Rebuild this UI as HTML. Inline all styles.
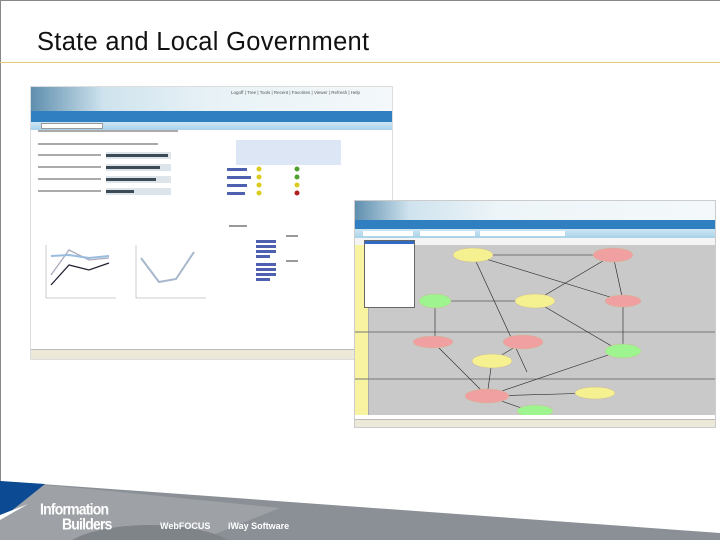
<!DOCTYPE html>
<html><head><meta charset="utf-8"><style>
*{margin:0;padding:0;box-sizing:border-box}
html,body{width:720px;height:540px;overflow:hidden}
body{background:#fff;position:relative;font-family:"Liberation Sans",sans-serif}
.abs{position:absolute}
.t{font-size:5px;color:#555;position:absolute;white-space:nowrap}
</style></head><body>
<div class="abs" style="left:0;top:0;width:720px;height:1px;background:#888"></div>
<div class="abs" style="left:0;top:0;width:1px;height:540px;background:#888"></div>
<div class="abs" style="left:37px;top:28px;font-size:25.5px;color:#111;letter-spacing:0.3px">State and Local Government</div>
<div class="abs" style="left:0;top:62px;width:720px;height:1px;background:#e0c870"></div>

<!-- screenshot 1 -->
<div class="abs" style="left:30px;top:86px;width:363px;height:274px;background:#fff;border:1px solid #ddd;overflow:hidden">
 <div class="abs" style="left:0;top:0;width:363px;height:24px;background:linear-gradient(90deg,#5f8fae,#cfe3ee 20%,#e8f2f6 50%,#f4f8fa)"></div>
 <div class="t" style="left:200px;top:3px;font-size:4.5px">Logoff | Tree | Tools | Recent | Favorites | Viewer | Refresh | Help</div>
 <div class="abs" style="left:0;top:24px;width:363px;height:11px;background:#2f7fc1"></div>
 <div class="abs" style="left:0;top:35px;width:363px;height:8px;background:linear-gradient(#cfe6f3,#a8d2ea)"></div>
 <div class="abs" style="left:10px;top:36px;width:62px;height:6px;background:#fff;border:1px solid #999"></div>
 <svg class="abs" style="left:0;top:43px" width="363" height="220">
  <g fill="#dde4ea"><rect x="75" y="22" width="65" height="7"/><rect x="75" y="34" width="65" height="7"/><rect x="75" y="46" width="65" height="7"/><rect x="75" y="58" width="65" height="7"/></g>
  <g fill="#3b4a55"><rect x="75" y="24" width="62" height="3"/><rect x="75" y="36" width="54" height="3"/><rect x="75" y="48" width="50" height="3"/><rect x="75" y="60" width="28" height="3"/></g>
  <g fill="#aaa"><rect x="7" y="24" width="63" height="2"/><rect x="7" y="36" width="63" height="2"/><rect x="7" y="48" width="63" height="2"/><rect x="7" y="60" width="63" height="2"/><rect x="7" y="0" width="140" height="2"/><rect x="7" y="13" width="120" height="2"/></g>
  <rect x="205" y="10" width="105" height="25" fill="#dde6f5"/>
  <g fill="#5060b0"><rect x="196" y="38" width="20" height="3"/><rect x="196" y="46" width="24" height="3"/><rect x="196" y="54" width="20" height="3"/><rect x="196" y="62" width="18" height="3"/></g>
  <g fill="#d8cc20"><circle cx="228" cy="39" r="2.5"/><circle cx="228" cy="47" r="2.5"/><circle cx="228" cy="55" r="2.5"/><circle cx="228" cy="63" r="2.5"/><circle cx="266" cy="55" r="2.5"/></g>
  <g fill="#50a030"><circle cx="266" cy="39" r="2.5"/><circle cx="266" cy="47" r="2.5"/></g>
  <circle cx="266" cy="63" r="2.5" fill="#b02020"/>
  <g fill="none" stroke-width="1.3"><polyline points="20,155 38,135 58,140 78,133" stroke="#223"/><polyline points="20,145 38,120 58,130 78,128" stroke="#aab"/><polyline points="20,126 38,125 58,128 78,126" stroke="#9bd" stroke-width="2"/>
  <polyline points="110,128 128,152 145,149 163,122" stroke="#a8b8cc" stroke-width="2"/></g>
  <g stroke="#999" stroke-width=".5"><line x1="15" y1="115" x2="15" y2="168"/><line x1="15" y1="168" x2="85" y2="168"/><line x1="105" y1="115" x2="105" y2="168"/><line x1="105" y1="168" x2="175" y2="168"/></g>
  <g fill="#5060b0"><rect x="225" y="110" width="20" height="3"/><rect x="225" y="115" width="20" height="3"/><rect x="225" y="120" width="20" height="3"/><rect x="225" y="125" width="14" height="3"/><rect x="225" y="133" width="20" height="3"/><rect x="225" y="138" width="20" height="3"/><rect x="225" y="143" width="20" height="3"/><rect x="225" y="148" width="14" height="3"/></g>
  <g fill="#999"><rect x="255" y="105" width="12" height="2"/><rect x="255" y="130" width="12" height="2"/><rect x="198" y="95" width="18" height="2"/></g>
 </svg>
 <div class="abs" style="left:0;top:262px;width:363px;height:10px;background:#ece9d8;border-top:1px solid #bbb"></div>
</div>

<!-- screenshot 2 -->
<div class="abs" style="left:354px;top:200px;width:362px;height:228px;background:#fff;border:1px solid #ccc;overflow:hidden">
 <div class="abs" style="left:0;top:0;width:362px;height:19px;background:linear-gradient(90deg,#5f8fae,#cfe3ee 15%,#eef5f8 40%,#f4f8fa)"></div>
 <div class="abs" style="left:0;top:19px;width:362px;height:9px;background:#2f7fc1"></div>
 <div class="abs" style="left:0;top:28px;width:362px;height:9px;background:linear-gradient(#cfe6f3,#a8d2ea)"></div>
 <div class="abs" style="left:8px;top:30px;width:50px;height:5px;background:#fff"></div>
 <div class="abs" style="left:65px;top:30px;width:55px;height:5px;background:#fff"></div>
 <div class="abs" style="left:125px;top:30px;width:85px;height:5px;background:#fff"></div>
 <div class="abs" style="left:0;top:37px;width:362px;height:7px;background:#f4f4f4"></div>
 <div class="abs" style="left:14px;top:44px;width:348px;height:170px;background:#c9c9c9"></div>
 <div class="abs" style="left:0;top:44px;width:14px;height:170px;background:#f7f3a0;border-right:1px solid #aaa"></div>
 <svg class="abs" style="left:0;top:44px" width="362" height="170">
  <line x1="0" y1="87" x2="362" y2="87" stroke="#777"/><line x1="0" y1="134" x2="362" y2="134" stroke="#777"/>
  <g stroke="#222" stroke-width=".6" fill="none">
   <line x1="118" y1="10" x2="258" y2="10"/><line x1="118" y1="10" x2="268" y2="56"/><line x1="118" y1="10" x2="172" y2="127"/><line x1="258" y1="10" x2="180" y2="56"/><line x1="258" y1="10" x2="268" y2="56"/><line x1="80" y1="56" x2="180" y2="56"/><line x1="80" y1="56" x2="80" y2="100"/><line x1="180" y1="56" x2="265" y2="106"/><line x1="268" y1="56" x2="268" y2="106"/><line x1="78" y1="97" x2="132" y2="151"/><line x1="137" y1="116" x2="168" y2="97"/><line x1="137" y1="116" x2="132" y2="151"/><line x1="132" y1="151" x2="265" y2="106"/><line x1="132" y1="151" x2="240" y2="148"/><line x1="132" y1="151" x2="175" y2="166"/>
  </g>
  <g stroke="#cb9" stroke-width=".5">
   <ellipse cx="118" cy="10" rx="20" ry="7" fill="#f5f190"/><ellipse cx="258" cy="10" rx="20" ry="7" fill="#f0a0a0"/><ellipse cx="80" cy="56" rx="16" ry="7" fill="#9ef590"/><ellipse cx="180" cy="56" rx="20" ry="7" fill="#f5f190"/><ellipse cx="268" cy="56" rx="18" ry="6" fill="#f0a0a0"/><ellipse cx="78" cy="97" rx="20" ry="6" fill="#f0a0a0"/><ellipse cx="168" cy="97" rx="20" ry="7" fill="#f0a0a0"/><ellipse cx="137" cy="116" rx="20" ry="7" fill="#f5f190"/><ellipse cx="268" cy="106" rx="18" ry="7" fill="#9ef590"/><ellipse cx="132" cy="151" rx="22" ry="7" fill="#f0a0a0"/><ellipse cx="240" cy="148" rx="20" ry="6" fill="#f5f190"/><ellipse cx="180" cy="166" rx="18" ry="6" fill="#9ef590"/>
  </g>
 </svg>
 <div class="abs" style="left:9px;top:39px;width:51px;height:68px;background:#fff;border:1px solid #666"></div>
 <div class="abs" style="left:10px;top:40px;width:49px;height:3px;background:#316ac5"></div>
 <div class="abs" style="left:0;top:218px;width:362px;height:9px;background:#ece9d8;border-top:1px solid #bbb"></div>
</div>

<!-- footer -->
<svg class="abs" style="left:0;top:440px" width="720" height="100">
 <polygon points="0,41 720,93 720,100 0,100" fill="#8a9095"/>
 <polygon points="0,41 100,50 280,68 200,100 0,100" fill="#9ea2a6"/>
 <ellipse cx="150" cy="115" rx="90" ry="30" fill="#7f8488"/>
 <polygon points="0,41 45,44 0,80" fill="#0c4a93"/>
 <polygon points="0,80 28,64 0,75" fill="#fff"/>
</svg>
<div class="abs" style="left:40px;top:502px;color:#fff;font-weight:bold;font-size:14px;line-height:13px;letter-spacing:-0.8px;transform:scaleY(1.15);transform-origin:top left">Information</div>
<div class="abs" style="left:62px;top:517px;color:#fff;font-weight:bold;font-size:14px;line-height:13px;letter-spacing:-0.8px;transform:scaleY(1.15);transform-origin:top left">Builders</div>
<div class="abs" style="left:160px;top:521px;color:#fff;font-weight:bold;font-size:9px;line-height:10px">WebFOCUS</div>
<div class="abs" style="left:228px;top:521px;color:#fff;font-weight:bold;font-size:9px;line-height:10px">iWay Software</div>
</body></html>
